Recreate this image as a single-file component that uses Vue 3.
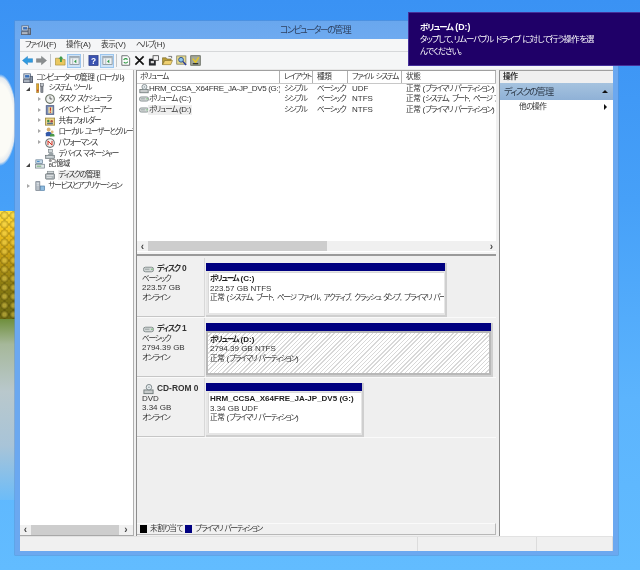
<script setup>
import { h } from 'vue'
const T = (p) => (p.t.match(/[\u4e00-\u9fff]+|[\u3000-\u30ff\uff00-\uffef]+|[^\u3000-\u9fff\uff00-\uffef]+/g) || []).map((run) =>
  /^[\u4e00-\u9fff]/.test(run) ? h('span', { class: 'kj' }, run)
    : /^[\u3000-\u30ff\uff00-\uffef]/.test(run) ? h('span', { class: 'ja' }, run) : run)
T.props = ['t']
const drive = '<rect x="0.5" y="3.5" width="11" height="5" rx="2.2" fill="#d4d8d8" stroke="#7f8a8a"/><rect x="2" y="5" width="5" height="1.5" fill="#a8b0b0"/><rect x="9" y="5" width="1.5" height="1.5" fill="#6cc06c"/>'
const cd = '<rect x="1" y="6.5" width="10" height="4" fill="#c8cccc" stroke="#707a7a"/><circle cx="6.5" cy="3.5" r="3" fill="#e6ecee" stroke="#7a8488"/><circle cx="6.5" cy="3.5" r="0.8" fill="#8a9498"/>'
const icons = {
  computer: '<rect x="1" y="1" width="8" height="6" fill="#dde6ee" stroke="#5a6a82"/><rect x="2.5" y="2.5" width="5" height="3" fill="#3a6fb8"/><rect x="0.5" y="8" width="11" height="3.5" fill="#aeb6c2" stroke="#5a6272"/><rect x="8.5" y="4" width="3" height="7" fill="#8f98a6" stroke="#4f5868"/>',
  tools: '<rect x="2" y="1" width="2.5" height="10.5" fill="#e6a828" stroke="#8a6410" stroke-width=".6"/><rect x="7" y="3" width="2.6" height="8.5" fill="#8a8f98" stroke="#4b5058" stroke-width=".6"/><rect x="6.3" y="0.8" width="4" height="3" fill="#c2c6cc" stroke="#4b5058" stroke-width=".6"/><rect x="2.6" y="8" width="1.3" height="2" fill="#c03030"/>',
  clock: '<circle cx="6" cy="6" r="5.2" fill="#eef0ee" stroke="#6a7264" stroke-width="1.3"/><path d="M6 2.8V6H8.6" fill="none" stroke="#333" stroke-width=".9"/>',
  event: '<rect x="1.5" y="0.8" width="9" height="10.4" fill="#7e8fb8" stroke="#4b5a80"/><rect x="4" y="2.5" width="5" height="7.5" fill="#e8dca8"/><path d="M6.5 3v4" stroke="#c83020" stroke-width="1.4"/><circle cx="6.5" cy="8.6" r=".8" fill="#c83020"/>',
  share: '<rect x="0.5" y="2.5" width="11" height="8.5" fill="#eed88a" stroke="#a08a40"/><circle cx="4" cy="6" r="1.5" fill="#3d8a4a"/><circle cx="8" cy="6.3" r="1.5" fill="#b04a40"/><rect x="2.5" y="8" width="7" height="2" fill="#58708a"/>',
  users: '<circle cx="4.4" cy="3" r="2.3" fill="#d8b070"/><path d="M1 11V7.5Q1 5.6 4.4 5.6T7.8 7.5V11z" fill="#3258a8"/><circle cx="8.6" cy="6" r="1.7" fill="#e0b878"/><path d="M6 11.5V9.6Q6 8 8.6 8T11.4 9.6V11.5z" fill="#4a9a48"/>',
  perf: '<circle cx="6" cy="6" r="5.2" fill="#f4f4f2" stroke="#6f7678" stroke-width="1.3"/><path d="M3.6 8.6V3.4L8.4 8.6V3.4" fill="none" stroke="#d02818" stroke-width="1.2"/>',
  devmgr: '<rect x="4" y="0.8" width="5" height="3.5" fill="#cfd6d8" stroke="#6f7a7e" stroke-width=".7"/><path d="M5.5 4.5L3 7.5H10V4.5z" fill="#9aa4a8"/><rect x="0.6" y="7.5" width="10.8" height="3.8" fill="#b6bec2" stroke="#5c666a" stroke-width=".7"/><path d="M2 9.4H9" stroke="#eef2f2" stroke-width=".8"/>',
  storage: '<rect x="1" y="1" width="8" height="4.5" fill="#c4d8e8" stroke="#607a90" stroke-width=".8"/><rect x="2.5" y="2.3" width="3" height="1.4" fill="#4a90c8"/><rect x="0.6" y="6.3" width="10.8" height="4.6" fill="#dfe6e8" stroke="#6b7880" stroke-width=".8"/><rect x="2" y="8" width="5.5" height="1.2" fill="#6fae70"/>',
  disk: '<rect x="3" y="1.5" width="7.5" height="3" fill="#d0d6d8" stroke="#7b8488" stroke-width=".7"/><rect x="0.6" y="4.5" width="10.8" height="6.5" rx="1" fill="#aeb6ba" stroke="#596266" stroke-width=".7"/><path d="M2 6.5H10M2 8.8H8" stroke="#f0f2f2" stroke-width=".9"/>',
  services: '<rect x="1" y="0.8" width="4.8" height="10.4" fill="#b8c0c8" stroke="#6a7480" stroke-width=".8"/><path d="M2 3H5M2 5H5" stroke="#eef1f4" stroke-width=".7"/><rect x="6.5" y="6" width="5" height="5.2" fill="#8fbce0" stroke="#4f7ca4" stroke-width=".8"/>',
  drive,
  cd,
  back: '<path d="M0.5 6L6 1.5V4H11.5V8H6V10.5z" fill="#2f9be0" stroke="#1e78bc" stroke-width=".5"/>',
  forward: '<path d="M11.5 6L6 1.5V4H0.5V8H6V10.5z" fill="#8a8e90" stroke="#707476" stroke-width=".5"/>',
  up: '<path d="M0.5 3.5H4.5L5.5 5H11V11H0.5z" fill="#eac860" stroke="#a48a34" stroke-width=".7"/><path d="M6.5 1L3.8 4H5.5V7.5H7.5V4H9.2z" fill="#3f9a48"/>',
  pane: '<rect x="1" y="1.5" width="10" height="9" fill="#eef1f3" stroke="#7b868e" stroke-width=".8"/><rect x="1" y="1.5" width="10" height="2" fill="#a7b2ba"/><path d="M8 5L5.5 7L8 9z" fill="#2d9a48"/><path d="M4 4V10.5" stroke="#9aa4ac" stroke-width=".7"/>',
  help: '<rect x="1" y="0.5" width="10" height="11" fill="#3a52b0" stroke="#24347c" stroke-width=".7"/><text x="6" y="9.4" font-size="9" font-weight="700" text-anchor="middle" fill="#fff" font-family="Liberation Sans, sans-serif">?</text>',
  doc: '<path d="M2 0.8H8L10.5 3.2V11.2H2z" fill="#fdfdfd" stroke="#555a5a" stroke-width=".9"/><path d="M4 5.5A2.4 2.4 0 0 1 8.2 5M8.4 7.2A2.4 2.4 0 0 1 4.2 7.8" fill="none" stroke="#2c9a40" stroke-width="1.2"/>',
  close: '<path d="M1.5 1.5L10.5 10.5M10.5 1.5L1.5 10.5" stroke="#111" stroke-width="1.8"/>',
  props: '<path d="M1 4H8.5V11.5H1z" fill="#26282c"/><rect x="5.5" y="0.8" width="6" height="5" fill="#f4f4f4" stroke="#333" stroke-width=".8"/><path d="M3 6.5H6.5V9H3z" fill="#d8d8d8"/>',
  open: '<path d="M0.5 3H4.5L5.5 4.3H10V6H3L0.5 10.5z" fill="#b89c38" stroke="#6e5c1c" stroke-width=".6"/><path d="M3 6H11.5L9.5 10.5H0.8z" fill="#efd070" stroke="#80681c" stroke-width=".6"/><path d="M7 1.5H10.5V3.5" fill="none" stroke="#333" stroke-width=".7"/>',
  find: '<rect x="0.8" y="1" width="10" height="9" fill="#e8dc90" stroke="#77775a" stroke-width=".8"/><circle cx="5.5" cy="5.2" r="2.6" fill="#8cc4ec" stroke="#2a4a8a" stroke-width="1"/><path d="M7.5 7.2L11 10.8" stroke="#2a3a9a" stroke-width="1.5"/>',
  wizard: '<rect x="0.8" y="0.8" width="10.4" height="10.4" fill="#a4a898" stroke="#54584c" stroke-width=".8"/><path d="M3 4L6 8L9.5 2.5" fill="none" stroke="#e8c820" stroke-width="1.6"/><path d="M3 9.5H9" stroke="#26281e" stroke-width="1.3"/>'
}
const menus = ['ファイル(F)', '操作(A)', '表示(V)', 'ヘルプ(H)']
const tools = [
  { i: 'back' }, { i: 'forward' }, { sep: 1 }, { i: 'up' }, { i: 'pane', on: 1 }, { sep: 1 },
  { i: 'help' }, { i: 'pane', on: 1 }, { sep: 1, thin: 1 }, { i: 'doc' }, { i: 'close' },
  { i: 'props' }, { i: 'open' }, { i: 'find' }, { i: 'wizard' }
]
const tree = [
  { t: 'コンピューターの管理 (ローカル)', i: 'computer', l: 0 },
  { t: 'システム ツール', i: 'tools', l: 1, a: 'open' },
  { t: 'タスク スケジューラ', i: 'clock', l: 2, a: 'closed' },
  { t: 'イベント ビューアー', i: 'event', l: 2, a: 'closed' },
  { t: '共有フォルダー', i: 'share', l: 2, a: 'closed' },
  { t: 'ローカル ユーザーとグループ', i: 'users', l: 2, a: 'closed' },
  { t: 'パフォーマンス', i: 'perf', l: 2, a: 'closed' },
  { t: 'デバイス マネージャー', i: 'devmgr', l: 2 },
  { t: '記憶域', i: 'storage', l: 1, a: 'open' },
  { t: 'ディスクの管理', i: 'disk', l: 2, sel: 1 },
  { t: 'サービスとアプリケーション', i: 'services', l: 1, a: 'closed' }
]
const cols = ['ボリューム', 'レイアウト', '種類', 'ファイル システム', '状態']
const rows = [
  ['HRM_CCSA_X64FRE_JA-JP_DV5 (G:)', 'シンプル', 'ベーシック', 'UDF', '正常 (プライマリ パーティション)', 'cd'],
  ['ボリューム (C:)', 'シンプル', 'ベーシック', 'NTFS', '正常 (システム, ブート, ページ ファイル, アクティブ)', 'drive'],
  ['ボリューム (D:)', 'シンプル', 'ベーシック', 'NTFS', '正常 (プライマリ パーティション)', 'drive', 1]
]
const disks = [
  { name: 'ディスク 0', icon: 'drive', l: ['ベーシック', '223.57 GB', 'オンライン'], cls: 'p-c', v: 'ボリューム (C:)', s: '223.57 GB NTFS', st: '正常 (システム, ブート, ページ ファイル, アクティブ, クラッシュ ダンプ, プライマリ パーティション)' },
  { name: 'ディスク 1', icon: 'drive', l: ['ベーシック', '2794.39 GB', 'オンライン'], cls: 'p-d', v: 'ボリューム (D:)', s: '2794.39 GB NTFS', st: '正常 (プライマリ パーティション)' },
  { name: 'CD-ROM 0', icon: 'cd', l: ['DVD', '3.34 GB', 'オンライン'], cls: 'p-g', v: 'HRM_CCSA_X64FRE_JA-JP_DV5 (G:)', s: '3.34 GB UDF', st: '正常 (プライマリ パーティション)' }
]
</script>

<template>
  <div class="desk">
    <div class="win">
      <div class="title">
        <svg class="ti" viewBox="0 0 12 12" v-html="icons.computer"></svg>
        <span class="tt"><T t="コンピューターの管理" /></span>
      </div>
      <div class="menu"><span v-for="m in menus" :key="m"><T :t="m" /></span></div>
      <div class="toolbar">
        <template v-for="(b, n) in tools" :key="n">
          <i v-if="b.sep" class="sep" :class="{ thin: b.thin }"></i>
          <span v-else class="tb" :class="{ on: b.on }"><svg viewBox="0 0 12 12" v-html="icons[b.i]"></svg></span>
        </template>
      </div>
      <div class="main">
        <aside class="tree">
          <div class="tree-list">
            <div v-for="r in tree" :key="r.t" class="node" :class="'l' + r.l">
              <i class="tw" :class="r.a"></i>
              <svg class="ni" viewBox="0 0 12 12" v-html="icons[r.i]"></svg>
              <span class="nt" :class="{ sel: r.sel }"><T :t="r.t" /></span>
            </div>
          </div>
          <div class="hs treehs"><b>‹</b><i></i><b>›</b></div>
        </aside>
        <section class="center">
          <div class="list">
            <div class="lh"><span v-for="c in cols" :key="c"><T :t="c" /></span></div>
            <div v-for="r in rows" :key="r[0]" class="lr">
              <span class="vc"><svg viewBox="0 0 12 12" v-html="icons[r[5]]"></svg><em :class="{ sel: r[6] }"><T :t="r[0]" /></em></span>
              <span><T :t="r[1]" /></span><span class="ty"><T :t="r[2]" /></span><span>{{ r[3] }}</span><span><T :t="r[4]" /></span>
            </div>
            <div class="fill"></div>
            <div class="hs lisths"><b>‹</b><i></i><b>›</b></div>
          </div>
          <div class="split"></div>
          <div class="disks">
            <div v-for="d in disks" :key="d.name" class="dr">
              <div class="dl">
                <div class="dn"><svg viewBox="0 0 12 12" v-html="icons[d.icon]"></svg><span><T :t="d.name" /></span></div>
                <div v-for="x in d.l" :key="x"><T :t="x" /></div>
              </div>
              <div class="part" :class="d.cls">
                <div class="bar"></div>
                <div class="vol">
                  <strong><T :t="d.v" /></strong>
                  <div><T :t="d.s" /></div>
                  <div class="clip"><T :t="d.st" /></div>
                </div>
              </div>
            </div>
          </div>
          <div class="legend">
            <i class="sw k"></i><span><T t="未割り当て" /></span><i class="sw n"></i><span><T t="プライマリ パーティション" /></span>
          </div>
        </section>
        <aside class="act">
          <div class="ah"><T t="操作" /></div>
          <div class="ab"><span><T t="ディスクの管理" /></span><i class="tu"></i></div>
          <div class="ai"><span><T t="他の操作" /></span><i class="tr"></i></div>
        </aside>
      </div>
      <div class="status"><i></i><i></i><i></i></div>
    </div>
    <div class="toast">
      <strong><T t="ボリューム (D:)" /></strong>
      <p><T t="タップして、リムーバブル ドライブ に対して行う操作を選" /><br /><T t="んでください。" /></p>
    </div>
  </div>
</template>

<style>
html, body { margin: 0; background: #4aa5fb; }
.ja { font-size: .95em; letter-spacing: -.165em; }
.kj { font-size: .95em; letter-spacing: -.06em; }
.toast .ja { letter-spacing: -.125em; }
.l0 .ja { letter-spacing: -.21em; }
</style>

<style scoped>
* { box-sizing: border-box; }
i, em { font-style: normal; }
.desk {
  position: relative; width: 640px; height: 570px; overflow: hidden;
  padding: 21px 22px 15px 15px;
  font: 8px/10px "Liberation Sans", "Noto Sans CJK JP", sans-serif;
  font-feature-settings: "palt"; color: #333;
  background:
    radial-gradient(ellipse 17px 46px at 0 120px, #fbfbf6 0 78%, #e4eaf0 92%, transparent 100%),
    linear-gradient(180deg, #3a92f4 0, #46a0f8 200px, #5cb4fd 400px, #62bcff 570px);
}
.desk::before {
  content: ""; position: absolute; left: 0; top: 211px; width: 15px; height: 108px;
  background:
    radial-gradient(circle at 4.5px 4.5px, rgba(240, 215, 90, .45) 0 1.5px, rgba(60, 50, 0, .28) 4px, transparent 4.5px) 0 0 / 9px 9px,
    linear-gradient(180deg, #ffe040 0, #f4c420 18%, #c8a014 40%, #8c7c12 68%, #6a6810 100%);
}
.desk::after {
  content: ""; position: absolute; left: 0; top: 319px; width: 15px; height: 181px;
  background: linear-gradient(180deg, #6f8f3c 0, #a6b89a 14%, #b9c8cc 40%, #a8c4d8 70%, #6cbcf8 100%);
}
.win {
  position: relative; z-index: 1;
  width: 603px; height: 534px; display: flex; flex-direction: column;
  background: #f0f0f0; border: 5px solid #6ba8f0; border-width: 0 5px 4px;
  box-shadow: 0 0 0 .5px #5c90d0; filter: blur(.3px);
}
.title {
  height: 18px; margin: 0 -5px; padding: 0 5px 0 6px; background: linear-gradient(#69a7ee, #6eaaf0);
  display: flex; align-items: center; position: relative;
}
.ti { width: 10px; height: 10px; }
.tt { position: absolute; left: 265px; font-size: 9.4px; color: #2e4160; }
.menu { height: 13px; background: #f5f6f7; border-bottom: 1px solid #d6d8da; display: grid; grid-template-columns: 41px 35px 35px auto; padding-left: 5px; align-items: center; }
.toolbar { height: 18px; background: #f5f6f7; display: flex; align-items: center; border-bottom: 1px solid #e8e8e8; }
.tb { width: 14px; height: 14px; display: flex; align-items: center; justify-content: center; }
.tb svg { width: 11px; height: 11px; }
.tb.on { background: #cfe3f6; outline: 1px solid #9cc6ee; outline-offset: -1px; }
.sep { width: 5px; height: 13px; display: block; position: relative; }
.sep.thin { width: 4px; }
.sep::after { content: ""; position: absolute; left: 2px; top: 0; bottom: 0; width: 1px; background: #c2c4c6; }
.main { height: 466px; display: flex; background: #f0f0f0; }
.tree { width: 114px; border-right: 1px solid #b0b0b0; border-bottom: 1px solid #a8a8a8; background: #fff; display: flex; flex-direction: column; }
.tree-list { flex: 1; padding-top: 2.2px; overflow: hidden; }
.node { height: 10.85px; display: flex; align-items: center; white-space: nowrap; overflow: hidden; }
.tw { width: 8px; height: 8px; flex: none; display: block; position: relative; }
.tw.open::after { content: ""; position: absolute; left: 1px; top: 2.5px; border-style: solid; border-width: 0 0 4px 4px; border-color: transparent transparent #444; }
.tw.closed::after { content: ""; position: absolute; left: 2px; top: 1.5px; border-style: solid; border-width: 2.5px 0 2.5px 3.5px; border-color: transparent transparent transparent #a8a8a8; }
.ni { width: 10px; height: 10px; flex: none; margin-right: 2.5px; }
.l0 { padding-left: 3px; }
.l0 .tw { display: none; }
.l1 { padding-left: 5px; }
.l1 .tw { margin-right: 2px; }
.l2 { padding-left: 16px; }
.l2 .tw { margin-right: 1px; }
.nt { padding: 0 1px; }
.nt.sel, em.sel { background: #eeeeee; }
.hs { display: flex; align-items: center; background: #f0f0f0; height: 10px; flex: none; font-weight: 700; color: #444; }
.hs b { width: 11px; text-align: center; flex: none; font-size: 10px; line-height: 9px; }
.hs i { background: #cdcdcd; height: 10px; display: block; }
.treehs { margin-bottom: .5px; }
.treehs i { width: 88px; }
.treehs b:last-child { flex: 1; }
.center { width: 360px; margin-left: 2px; display: flex; flex-direction: column; border-left: 1px solid #8c8c8c; }
.list { height: 182px; background: #fff; display: flex; flex-direction: column; border-top: 1px solid #a0a0a0; }
.lh, .lr { display: grid; grid-template-columns: 143px 33px 35px 54px 94px; white-space: nowrap; }
.lh { height: 12.6px; background: #fff; border-bottom: 1px solid #c8c8c8; align-items: center; }
.lh span { padding-left: 4px; border-right: 1px solid #b0b0b0; height: 11.6px; line-height: 12px; overflow: hidden; }
.lh span:first-child { padding-left: 3px; }
.lr { height: 10.4px; align-items: center; }
.lr span { padding-left: 4px; overflow: hidden; }
.lr .ty { padding-left: 4px; }
.lr .vc { padding-left: 2px; display: flex; align-items: center; gap: 0; }
.vc svg { width: 10px; height: 10px; flex: none; }
.vc em { padding: 0 1px; margin-left: -1px; letter-spacing: -.32px; }
.fill { flex: 1; }
.lisths { height: 10px; margin-bottom: 1px; }
.lisths i { width: 179px; }
.lisths b:last-child { flex: 1; text-align: right; padding-right: 3px; }
.split { height: 4px; background: #f4f4f4; border-bottom: 2px solid #9a9a9a; }
.disks { flex: 1; background: #efefef; padding-top: 2px; }
.dr { height: 60px; display: flex; border-bottom: 1px solid #fafafa; }
.dl { width: 68px; padding: 6px 0 0 5px; line-height: 9.3px; background: #f0f0f0; border-right: 1px solid #d8d8d8; border-bottom: 1px solid #c6c6c6; }
.dn { font-weight: 700; font-size: 8.4px; display: flex; align-items: center; gap: 3px; height: 10px; color: #333; }
.dn svg { width: 11px; height: 11px; margin-left: 1px; }
.part { margin-left: 1px; margin-top: 5px; display: flex; flex-direction: column; border-right: 2px solid #cfcfcf; border-bottom: 2px solid #cfcfcf; background: #e6e6e6; }
.bar { height: 8px; background: #000080; flex: none; }
.vol { flex: 1; margin: 1px 1px 2px 2px; background: #fff; padding: 2.4px 0 0 2px; line-height: 9.3px; overflow: hidden; box-shadow: inset 1px 1px 0 #d8d8d8; }
.vol strong { display: block; font-weight: 700; color: #222; white-space: nowrap; }
.clip { white-space: nowrap; overflow: hidden; }
.p-c { width: 241px; }
.p-d { width: 287px; }
.p-d .vol { margin: 0; border: 2px solid #b8b8b8; padding-top: 2px;
  background: repeating-linear-gradient(135deg, #ffffff 0 2px, #d8d8d8 2px 3px); box-shadow: none; }
.p-g { width: 158px; }
.legend { height: 12px; display: flex; align-items: center; padding-left: 3px; background: #f0f0f0; border-top: 1px solid #fafafa; border-bottom: 1px solid #b8b8b8; border-right: 1px solid #b8b8b8; margin-bottom: 1px; }
.sw { width: 7px; height: 8px; display: block; margin-right: 3px; flex: none; }
.sw.k { background: #000; }
.sw.n { background: #000080; margin-left: 3px; }
.act { width: 114px; margin-left: 3px; border-left: 1px solid #8c8c8c; background: #fff; display: flex; flex-direction: column; border-top: 1px solid #a0a0a0; }
.ah { height: 12px; background: #f0f0f0; font-weight: 700; line-height: 12px; padding-left: 3px; font-size: 8.2px; }
.ab { height: 17px; background: linear-gradient(#a6c3df, #8fb1d6); display: flex; align-items: center; justify-content: space-between; padding: 0 5px 0 4px; font-size: 9.6px; color: #2f3c4c; }
.tu { border-style: solid; border-width: 0 3px 3px; border-color: transparent transparent #111; }
.ai { display: flex; justify-content: space-between; align-items: center; padding: 2px 6px 0 19px; }
.tr { border-style: solid; border-width: 3px 0 3px 3.5px; border-color: transparent transparent transparent #111; }
.status { height: 15px; display: flex; background: #f0f0f0; border-top: 1px solid #e2e2e2; }
.status i { display: block; border-right: 1px solid #dcdcdc; }
.status i:nth-child(1) { width: 398px; }
.status i:nth-child(2) { width: 119px; }
.status i:nth-child(3) { width: 76px; }
.toast {
  position: absolute; z-index: 2; left: 408px; top: 12px; width: 232px; height: 54px;
  background: #1f0068; border: 1px solid #46309a; border-right: none;
  padding: 8px 10px 0 11px; color: #fff; line-height: 12px; font-size: 8.8px; filter: blur(.25px);
}
.toast strong { display: block; font-weight: 700; }
.toast p { margin: 0; }
</style>
